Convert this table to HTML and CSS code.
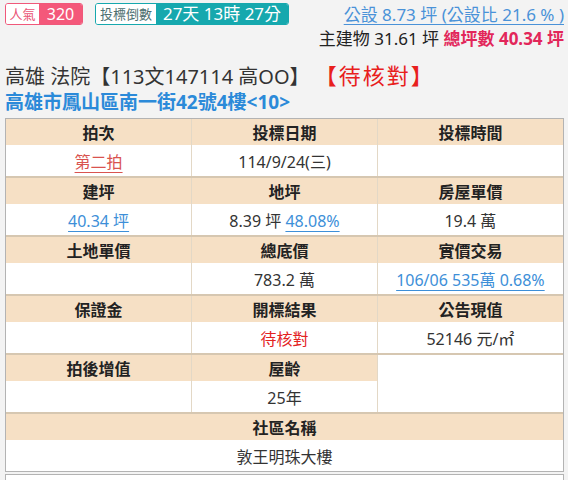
FILE: index.html
```html
<!DOCTYPE html>
<html lang="zh-Hant">
<head>
<meta charset="utf-8">
<link rel="stylesheet" href="styles.css">
</head>
<body>
<div class="top">
  <div class="badges">
    <span class="badge pink"><span class="lbl">人氣</span><span class="val">320</span></span>
    <span class="badge teal"><span class="lbl">投標倒數</span><span class="val">27天 13時 27分</span></span>
  </div>
  <div class="area">
    <a class="link">公設 8.73 坪 (公設比 21.6 % )</a>
    <div class="main">主建物 31.61 坪 <b class="total">總坪數 40.34 坪</b></div>
  </div>
</div>
<div class="title">高雄 法院【113文147114 高OO】 <span class="status">【待核對】</span></div>
<div class="addr">高雄市鳳山區南一街42號4樓&lt;10&gt;</div>
<div class="sheet">
  <table class="info">
    <tr class="h"><th>拍次</th><th>投標日期</th><th>投標時間</th></tr>
    <tr class="v"><td><a class="red">第二拍</a></td><td>114/9/24(三)</td><td></td></tr>
    <tr class="h sep"><th>建坪</th><th>地坪</th><th>房屋單價</th></tr>
    <tr class="v"><td><a class="blue">40.34 坪</a></td><td>8.39 坪 <a class="blue">48.08%</a></td><td>19.4 萬</td></tr>
    <tr class="h sep"><th>土地單價</th><th>總底價</th><th>實價交易</th></tr>
    <tr class="v"><td></td><td>783.2 萬</td><td><a class="blue">106/06 535萬 0.68%</a></td></tr>
    <tr class="h sep"><th>保證金</th><th>開標結果</th><th>公告現值</th></tr>
    <tr class="v"><td></td><td><span class="result">待核對</span></td><td>52146 元/㎡</td></tr>
    <tr class="h sep"><th>拍後增值</th><th>屋齡</th><td class="blank" rowspan="2"></td></tr>
    <tr class="v"><td></td><td>25年</td></tr>
    <tr class="h sep"><th colspan="3">社區名稱</th></tr>
    <tr class="v"><td colspan="3">敦王明珠大樓</td></tr>
  </table>
</div>
<div class="next"></div>
</body>
</html>
```
FILE: styles.css
```css
html, body {
  margin: 0;
  padding: 0;
  background: #f3f3f3;
}
body {
  font-family: "Noto Sans", "Noto Sans CJK TC", sans-serif;
  color: #333;
  padding: 3px 4px 0 5px;
  overflow: hidden;
  height: 477px;
}
.top {
  display: flex;
  justify-content: space-between;
  align-items: flex-start;
}
.badges {
  display: flex;
  gap: 12px;
}
.badge {
  display: inline-flex;
  height: 20px;
  border-radius: 3px;
  overflow: hidden;
  line-height: 20px;
  white-space: nowrap;
}
.badge .lbl {
  background: #fff;
  font-size: 13px;
  text-align: center;
}
.badge .val {
  color: #fff;
  text-align: center;
}
.pink { border: 1px solid #f0587a; }
.pink .lbl { color: #ea5476; width: 33px; }
.pink .val { background: #f4587a; width: 43px; font-size: 16px; }
.teal { border: 1px solid #16a8ae; }
.teal .lbl { color: #4d6f70; width: 60px; }
.teal .val { background: #16a8ae; font-size: 17px; width: 132px; }
.area {
  text-align: right;
  margin-top: -1px;
  white-space: nowrap;
}
.link {
  color: #4a92d8;
  font-size: 17px;
  line-height: 25px;
  text-decoration: underline;
  text-underline-offset: 3px;
}
.main {
  font-size: 17px;
  line-height: 24px;
  color: #222;
}
.total {
  color: #e2265a;
}
.title {
  font-size: 20px;
  line-height: 26px;
  height: 26px;
  color: #333;
  margin-top: 13px;
  white-space: nowrap;
}
.status {
  color: #e8201c;
  font-size: 22px;
  line-height: 20px;
  margin-left: 0;
  letter-spacing: 2px;
}
.addr {
  font-size: 19px;
  font-weight: bold;
  line-height: 24px;
  color: #2b8ad9;
}
.sheet {
  margin-top: 4px;
  border: 1px solid #b3b3b3;
  background: #fff;
  width: 557px;
}
.info {
  width: 100%;
  border-collapse: collapse;
  table-layout: fixed;
  font-size: 16px;
}
.info th, .info td {
  text-align: center;
  border-left: 1px solid #e3d8c6;
  padding: 0;
}
.info th:first-child, .info td:first-child { border-left: 0; }
.h th {
  background: #f6e0c5;
  color: #222;
  height: 26px;
  font-weight: bold;
}
.v td {
  height: 31px;
  color: #333;
}
.sep th, .sep td { border-top: 2px solid #d6c7b1; }
.blank { background: #fff; }
.red {
  color: #d9534f;
  text-decoration: underline;
  text-underline-offset: 4px;
}
.blue {
  color: #3d8fd8;
  text-decoration: underline;
  text-underline-offset: 4px;
}
.result { color: #e3231f; }
.next {
  margin-top: 2px;
  border: 1px solid #b3b3b3;
  border-bottom: 0;
  background: #fff;
  width: 557px;
  height: 10px;
}
```
